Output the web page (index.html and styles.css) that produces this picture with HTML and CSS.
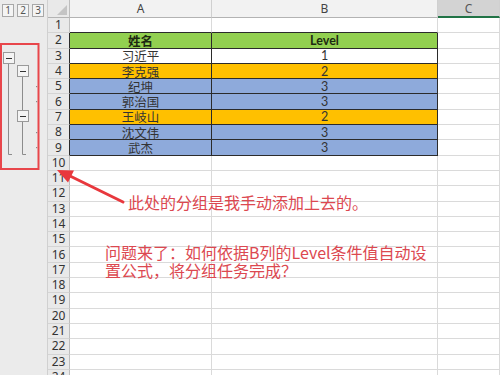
FILE: index.html
```html
<!DOCTYPE html>
<html lang="zh-CN">
<head>
  <meta charset="UTF-8" />
  <title>分组</title>
  <link rel="stylesheet" href="styles.css">
</head>
<body>
<div class="app">
  <div class="outline">
    <div class="levels"><span>1</span><span>2</span><span>3</span></div>
    <svg class="tree" width="48" height="357" viewBox="0 0 48 357">
      <g stroke="#8c8c8c" stroke-width="1" fill="none">
        <path d="M8.5 45.5V136.5H12"/>
        <path d="M22.5 58.5V92.5M22.5 103.5V136.5H26"/>
      </g>
      <g fill="#f4f4f4" stroke="#9a9a9a">
        <rect x="3.5" y="34.5" width="11" height="11"/>
        <rect x="17.5" y="47.5" width="11" height="11"/>
        <rect x="17.5" y="92.5" width="11" height="11"/>
      </g>
      <g stroke="#333" stroke-width="1.2">
        <path d="M6 40.5H12M20 53.5H26M20 98.5H26"/>
      </g>
      <g fill="#8c8c8c">
        <rect x="36" y="68" width="1.2" height="1.2"/>
        <rect x="36" y="83" width="1.2" height="1.2"/>
        <rect x="36" y="114" width="1.2" height="1.2"/>
        <rect x="36" y="129" width="1.2" height="1.2"/>
      </g>
    </svg>
  </div>

  <div class="sheet">
    <div class="row head">
      <div class="rh corner">
        <svg width="10" height="10" viewBox="0 0 10 10"><path d="M10 0V10H0Z" fill="#c4c4c4"/></svg>
      </div>
      <div class="c a">A</div>
      <div class="c b">B</div>
      <div class="c cc sel">C</div>
    </div>
    <div class="row"><div class="rh">1</div><div class="c a top"></div><div class="c b top"></div><div class="c cc"></div></div>
    <div class="row green"><div class="rh t">2</div><div class="c a t bold">姓名</div><div class="c b t bold">Level</div><div class="c cc"></div></div>
    <div class="row white"><div class="rh t">3</div><div class="c a t">习近平</div><div class="c b t">1</div><div class="c cc"></div></div>
    <div class="row orange"><div class="rh t">4</div><div class="c a t">李克强</div><div class="c b t">2</div><div class="c cc"></div></div>
    <div class="row blue"><div class="rh t">5</div><div class="c a t">纪坤</div><div class="c b t">3</div><div class="c cc"></div></div>
    <div class="row blue"><div class="rh t">6</div><div class="c a t">郭治国</div><div class="c b t">3</div><div class="c cc"></div></div>
    <div class="row orange"><div class="rh t">7</div><div class="c a t">王岐山</div><div class="c b t">2</div><div class="c cc"></div></div>
    <div class="row blue"><div class="rh t">8</div><div class="c a t">沈文伟</div><div class="c b t">3</div><div class="c cc"></div></div>
    <div class="row blue"><div class="rh t">9</div><div class="c a t">武杰</div><div class="c b t">3</div><div class="c cc"></div></div>
    <div class="row"><div class="rh">10</div><div class="c a"></div><div class="c b"></div><div class="c cc"></div></div>
    <div class="row"><div class="rh">11</div><div class="c a"></div><div class="c b"></div><div class="c cc"></div></div>
    <div class="row"><div class="rh">12</div><div class="c a"></div><div class="c b"></div><div class="c cc"></div></div>
    <div class="row"><div class="rh">13</div><div class="c a"></div><div class="c b"></div><div class="c cc"></div></div>
    <div class="row"><div class="rh">14</div><div class="c a"></div><div class="c b"></div><div class="c cc"></div></div>
    <div class="row"><div class="rh">15</div><div class="c a"></div><div class="c b"></div><div class="c cc"></div></div>
    <div class="row"><div class="rh">16</div><div class="c a"></div><div class="c b"></div><div class="c cc"></div></div>
    <div class="row"><div class="rh">17</div><div class="c a"></div><div class="c b"></div><div class="c cc"></div></div>
    <div class="row"><div class="rh">18</div><div class="c a"></div><div class="c b"></div><div class="c cc"></div></div>
    <div class="row"><div class="rh">19</div><div class="c a"></div><div class="c b"></div><div class="c cc"></div></div>
    <div class="row"><div class="rh">20</div><div class="c a"></div><div class="c b"></div><div class="c cc"></div></div>
    <div class="row"><div class="rh">21</div><div class="c a"></div><div class="c b"></div><div class="c cc"></div></div>
    <div class="row"><div class="rh">22</div><div class="c a"></div><div class="c b"></div><div class="c cc"></div></div>
    <div class="row"><div class="rh">23</div><div class="c a"></div><div class="c b"></div><div class="c cc"></div></div>
    <div class="row"><div class="rh">24</div><div class="c a"></div><div class="c b"></div><div class="c cc"></div></div>
  </div>

  <!-- annotations drawn over the sheet -->
  <svg class="marks" width="500" height="375" viewBox="0 0 500 375">
    <rect x="1" y="44" width="37.5" height="125" fill="none" stroke="#e8464b" stroke-width="2"/>
    <path d="M123 202L70 176" stroke="#e8383d" stroke-width="3" stroke-linecap="round"/>
    <polygon points="57,170 74,170.5 68,182.5" fill="#e8383d"/>
  </svg>
  <div class="note note1">此处的分组是我手动添加上去的。</div>
  <div class="note note2">问题来了：如何依据B列的Level条件值自动设<br>置公式，将分组任务完成？</div>
</div>
</body>
</html>
```

FILE: styles.css
```css
* {
  box-sizing: border-box;
}

body {
  margin: 0;
  font-family: "Noto Sans", "Noto Sans CJK SC", sans-serif;
  background: #fff;
}

.app {
  position: relative;
  display: flex;
  width: 500px;
  height: 375px;
  overflow: hidden;
  background: #fff;
}

/* outline pane on the left */
.outline {
  width: 48px;
  flex: none;
  background: #ebebeb;
  border-right: 1px solid #d0d0d0;
}

.levels {
  height: 18px;
  display: flex;
  gap: 3px;
  padding: 4px 0 0 2px;
}

.levels span {
  width: 12px;
  height: 13px;
  border: 1px solid #a8a8a8;
  background: #f4f4f4;
  font-size: 10px;
  line-height: 11px;
  color: #555;
  text-align: center;
}

.tree {
  display: block;
}

/* grid */
.sheet {
  flex: 1;
  min-width: 0;
}

.row {
  display: flex;
  height: 15.3px;
}

.row.head {
  height: 18px;
}

.rh {
  width: 22px;
  flex: none;
  display: flex;
  align-items: center;
  justify-content: center;
  background: #e9e9e9;
  border-right: 1px solid #bdbdbd;
  border-bottom: 1px solid #d4d4d4;
  font-family: "Noto Sans", sans-serif;
  font-size: 12px;
  line-height: 1;
  color: #333;
}

.rh.corner {
  align-items: flex-end;
  justify-content: flex-end;
  padding: 0 2px 2px 0;
  border-bottom: 1px solid #b3b3b3;
}

.rh.corner svg {
  display: block;
}

.c {
  display: flex;
  align-items: center;
  justify-content: center;
  border-right: 1px solid #dadada;
  border-bottom: 1px solid #dadada;
  font-family: Lato, "Noto Sans CJK SC", sans-serif;
  font-size: 12.5px;
  color: #333;
  white-space: nowrap;
}

.a {
  width: 142px;
  flex: none;
}

.b {
  width: 226px;
  flex: none;
}

.cc {
  flex: 1;
}

.head .c {
  background: #f2f2f2;
  border-right-color: #d0d0d0;
  border-bottom: 1px solid #b3b3b3;
  font-family: "Noto Sans", sans-serif;
  font-size: 12px;
  color: #444;
}

.head .c.sel {
  background: #d3d3d3;
  border-bottom: 2px solid #217346;
  color: #555;
}

.c.top {
  border-bottom-color: #2b2b2b;
}

.c.t,
.rh.t {
  border-right-color: #2b2b2b;
}

.c.t {
  border-bottom-color: #2b2b2b;
}

.bold {
  font-weight: bold;
  color: #1e2a12;
}

.green .c.t { background: #92d050; }
.white .c.t { background: #fff; }
.orange .c.t { background: #ffc000; }
.blue .c.t { background: #8eaadb; }

/* red marks and notes */
.marks {
  position: absolute;
  left: 0;
  top: 0;
  pointer-events: none;
}

.note {
  position: absolute;
  font-family: "Noto Sans CJK SC", sans-serif;
  font-size: 16px;
  line-height: 18px;
  color: #dc4850;
  white-space: nowrap;
}

.note1 {
  left: 128px;
  top: 193px;
}

.note2 {
  left: 105px;
  top: 243px;
}
```
